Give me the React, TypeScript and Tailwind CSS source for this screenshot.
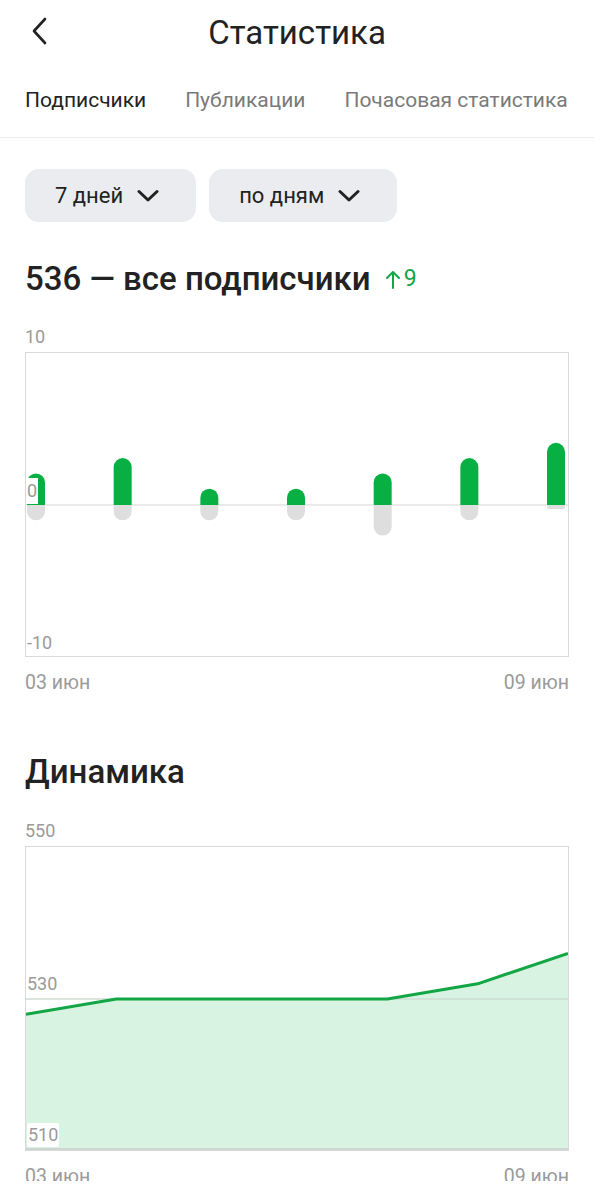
import React from "react";

const font = { fontFamily: "Roboto, 'Noto Sans', sans-serif" };

const plus = [2, 3, 1, 1, 2, 3, 4];
const minus = [1, 1, 1, 1, 2, 1, 0];

const dyn = [528, 530, 530, 530, 530, 532, 536];

function Chevron() {
  return (
    <svg width="22" height="14" viewBox="0 0 22 14" fill="none">
      <path d="M2 2.5 L11 11 L20 2.5" stroke="#222" strokeWidth="3" strokeLinecap="round" strokeLinejoin="round" />
    </svg>
  );
}

function Pill({ label }: { label: string }) {
  return (
    <div className="flex h-[53px] items-center gap-[14px] rounded-[14px] bg-[#ebecef] pl-[30px] pr-[37px] text-[22px] text-[#222]">
      <span>{label}</span>
      <Chevron />
    </div>
  );
}

function BarsChart() {
  const zero = 152;
  const unit = 15.3;
  return (
    <div className="relative h-[305px] w-full border border-[#d9d9d9]">
      <svg className="absolute left-0 top-0" width="542" height="303" viewBox="0 0 542 303">
        <line x1="0" y1={zero} x2="542" y2={zero} stroke="#e3e3e3" strokeWidth="1.5" />
        {plus.map((v, i) => {
          const x = 10 + i * 86.67;
          const top = zero - v * unit - 1;
          const g = minus[i];
          const bottom = g === 0 ? zero + 4 : zero + g * unit;
          return (
            <g key={i}>
              {g === 0 ? (
                <rect x={x - 9} y={zero} width="18" height="4" rx="2" fill="#dedede" />
              ) : (
                <path d={`M${x - 9} ${zero} V${bottom - 9} A9 9 0 0 0 ${x + 9} ${bottom - 9} V${zero} Z`} fill="#dedede" />
              )}
              <path d={`M${x - 9} ${zero} V${top + 9} A9 9 0 0 1 ${x + 9} ${top + 9} V${zero} Z`} fill="#08b043" />
            </g>
          );
        })}
      </svg>
      <span className="absolute left-[1px] top-[125px] bg-white pr-[1px] text-[18px] leading-[26px] text-[#9a9a9a]">0</span>
      <span className="absolute bottom-[2px] left-[1px] text-[18px] leading-[22px] text-[#9a9a9a]">-10</span>
    </div>
  );
}

function LineChart() {
  const unit = 7.6;
  const pts = dyn.map((v, i) => [i * 90.33, (550 - v) * unit] as const);
  const line = pts.map((p, i) => `${i ? "L" : "M"}${p[0]} ${p[1]}`).join(" ");
  const area = `${line} L542 303 L0 303 Z`;
  return (
    <div className="relative h-[305px] w-full border border-[#d9d9d9]">
      <svg className="absolute left-0 top-0" width="542" height="303" viewBox="0 0 542 303">
        <path d={area} fill="#d8f3e2" />
        <line x1="0" y1="152" x2="542" y2="152" stroke="#cfdcd3" strokeWidth="1.5" />
        <path d={line} fill="none" stroke="#12a645" strokeWidth="3" strokeLinejoin="round" />
        <line x1="0" y1="302" x2="542" y2="302" stroke="#cfd6d1" strokeWidth="2" />
      </svg>
      <span className="absolute left-[1px] top-[125px] text-[18px] leading-[24px] text-[#9a9a9a]">530</span>
      <span className="absolute bottom-[3px] left-[1px] rounded-[2px] bg-white px-[1px] text-[18px] leading-[24px] text-[#9a9a9a]">510</span>
    </div>
  );
}

export default function App() {
  return (
    <div className="h-[1181px] overflow-hidden bg-white" style={font}>
      <div className="relative flex h-[65px] items-center justify-center">
        <svg className="absolute left-[30px] top-[17px]" width="20" height="28" viewBox="0 0 20 28" fill="none">
          <path d="M15 2 L4 14 L15 26" stroke="#222" strokeWidth="2.6" strokeLinecap="round" strokeLinejoin="round" />
        </svg>
        <h1 className="text-[33px] text-[#222]">Статистика</h1>
      </div>

      <div className="flex h-[73px] items-center gap-[39px] border-b border-[#ececec] px-[25px] text-[21px]">
        <span className="text-[#222]">Подписчики</span>
        <span className="text-[#7a7a7a]">Публикации</span>
        <span className="text-[#7a7a7a]">Почасовая статистика</span>
      </div>

      <div className="px-[25px]">
        <div className="flex gap-[13px] pt-[31px]">
          <Pill label="7 дней" />
          <Pill label="по дням" />
        </div>

        <div className="flex h-[100px] items-center gap-[14px] pt-[14px]">
          <h2 className="text-[33px] font-medium text-[#222]">536 — все подписчики</h2>
          <span className="flex items-center text-[23px] text-[#13a547]">
            <svg width="16" height="19" viewBox="0 0 16 19" fill="none">
              <path d="M8 18 V2 M2 8 L8 2 L14 8" stroke="#13a547" strokeWidth="2" strokeLinecap="round" strokeLinejoin="round" />
            </svg>
            <span className="ml-[3px]">9</span>
          </span>
        </div>

        <div className="text-[18px] leading-[30px] text-[#9a9a9a]">10</div>
        <BarsChart />
        <div className="flex h-[52px] items-center justify-between text-[19.5px] text-[#9a9a9a]">
          <span>03 июн</span>
          <span>09 июн</span>
        </div>

        <h2 className="flex h-[107px] items-center pt-[19px] text-[33px] font-medium text-[#222]">Динамика</h2>

        <div className="text-[18px] leading-[30px] text-[#9a9a9a]">550</div>
        <LineChart />
        <div className="flex h-[52px] items-center justify-between text-[19.5px] text-[#9a9a9a]">
          <span>03 июн</span>
          <span>09 июн</span>
        </div>
      </div>
    </div>
  );
}
